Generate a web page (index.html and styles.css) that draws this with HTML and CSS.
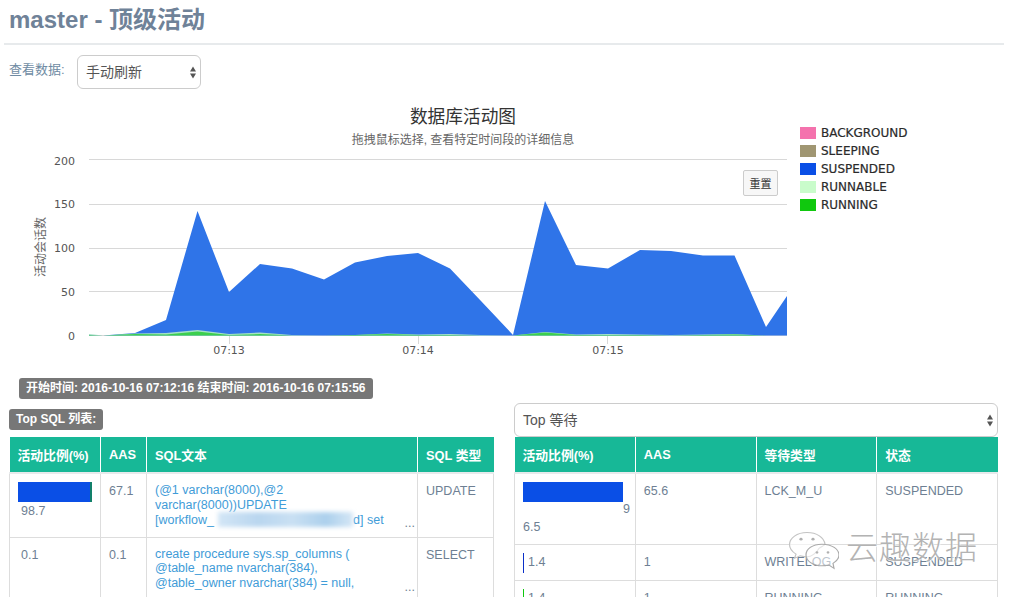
FILE: index.html
```html
<!DOCTYPE html>
<html lang="zh">
<head>
<meta charset="utf-8">
<title>master - 顶级活动</title>
<link rel="stylesheet" href="styles.css">
</head>
<body>
<header class="page-head"><h1 class="page-title">master - 顶级活动</h1></header>
<div class="filter-row">
  <label class="filter-label">查看数据:</label>
  <div class="select select-small"><span>手动刷新</span>
    <svg class="updown" width="6" height="13" viewBox="0 0 6 13"><path d="M3 0.500 6 5.500H0zM3 12.500 0 7.500H6z"/></svg>
  </div>
</div>
<section class="chart">
  <svg class="chart-svg" width="1010" height="265" viewBox="0 100 1010 265">
    <text class="chart-title" x="463" y="123" text-anchor="middle">数据库活动图</text>
    <text class="chart-sub" x="463" y="144" text-anchor="middle">拖拽鼠标选择, 查看特定时间段的详细信息</text>
    <g class="grid">
      <line x1="89" x2="787" y1="159.5" y2="159.5"/>
      <line x1="89" x2="787" y1="204.5" y2="204.5"/>
      <line x1="89" x2="787" y1="248.5" y2="248.5"/>
      <line x1="89" x2="787" y1="291.5" y2="291.5"/>
      <line x1="89" x2="787" y1="335.5" y2="335.5"/>
      <line x1="229.5" x2="229.5" y1="335" y2="344"/>
      <line x1="418.5" x2="418.5" y1="335" y2="344"/>
      <line x1="607.5" x2="607.5" y1="335" y2="344"/>
    </g>
    <path class="area-blue" d="M89 335 103 335.5 135 333 166 320 197.5 211 229 292 260 264 292 268.5 324 279.5 355 262.5 387 256 418 253 450 268.5 481 301 513 335 545 201 576 265 608 268.5 640 250 671 251 703 255.5 734.5 255.5 766 327 787 296V335.5H89z"/>
    <path class="area-pale" d="M89 334 103 335.5 135 333.5 166 333 197.5 330 229 334 260 332.5 292 335 324 335.5 355 335 387 333.5 418 334.5 450 334 481 335 513 335.5 545 332 576 334.5 608 334 640 334.5 671 335 703 334.5 734.5 334 766 335.5 787 335.5V335.5H89z"/>
    <path class="area-green" d="M89 335 103 335.5 135 334 166 334.5 197.5 331.5 229 335 260 334 292 335.5 324 335.5 355 335 387 334 418 335 450 335 481 335.5 513 335.5 545 332.5 576 335 608 335 640 335 671 335.5 703 335 734.5 334.5 766 335.5 787 335.5V335.5H89z"/>
    <g class="tick-y">
      <text x="75" y="165" text-anchor="end">200</text>
      <text x="75" y="208" text-anchor="end">150</text>
      <text x="75" y="252" text-anchor="end">100</text>
      <text x="75" y="296" text-anchor="end">50</text>
      <text x="75" y="340" text-anchor="end">0</text>
    </g>
    <g class="tick-x">
      <text x="229" y="354" text-anchor="middle">07:13</text>
      <text x="418" y="354" text-anchor="middle">07:14</text>
      <text x="608" y="354" text-anchor="middle">07:15</text>
    </g>
    <text class="axis-title" transform="translate(45 247) rotate(-90)" text-anchor="middle">活动会话数</text>
  </svg>
  <button class="reset">重置</button>
  <ul class="legend">
    <li class="legend-item"><i class="swatch sw-bg"></i>BACKGROUND</li>
    <li class="legend-item"><i class="swatch sw-sleep"></i>SLEEPING</li>
    <li class="legend-item"><i class="swatch sw-susp"></i>SUSPENDED</li>
    <li class="legend-item"><i class="swatch sw-runnable"></i>RUNNABLE</li>
    <li class="legend-item"><i class="swatch sw-run"></i>RUNNING</li>
  </ul>
</section>
<div class="range-row"><span class="tag">开始时间: 2016-10-16 07:12:16 结束时间: 2016-10-16 07:15:56</span></div>
<div class="panels">
  <section class="panel panel-left">
    <div class="panel-head"><span class="tag">Top SQL 列表:</span></div>
    <table class="data">
      <colgroup><col class="c-l1"><col class="c-l2"><col class="c-l3"><col class="c-l4"></colgroup>
      <thead><tr><th>活动比例(%)</th><th>AAS</th><th>SQL文本</th><th>SQL 类型</th></tr></thead>
      <tbody>
        <tr class="row-l1">
          <td class="pct-cell"><div class="bar" style="width:74px"><i class="seg-blue"></i><i class="seg-teal"></i></div><span class="pct">98.7</span></td>
          <td>67.1</td>
          <td class="sql"><a>(@1 varchar(8000),@2<br>varchar(8000))UPDATE<br>[workflow_<span class="blurred"></span>d] set</a><span class="more">...</span></td>
          <td>UPDATE</td>
        </tr>
        <tr class="row-l2">
          <td><span class="pct">0.1</span></td>
          <td>0.1</td>
          <td class="sql"><a>create procedure sys.sp_columns (<br>@table_name nvarchar(384),<br>@table_owner nvarchar(384) = null,</a><span class="more">...</span></td>
          <td>SELECT</td>
        </tr>
      </tbody>
    </table>
  </section>
  <section class="panel panel-right">
    <div class="select select-wide"><span>Top 等待</span>
      <svg class="updown" width="6" height="13" viewBox="0 0 6 13"><path d="M3 0.500 6 5.500H0zM3 12.500 0 7.500H6z"/></svg>
    </div>
    <table class="data data-wait">
      <colgroup><col class="c-r"><col class="c-r"><col class="c-r"><col class="c-r"></colgroup>
      <thead><tr><th>活动比例(%)</th><th>AAS</th><th>等待类型</th><th>状态</th></tr></thead>
      <tbody>
        <tr class="row-r1">
          <td class="wrap-pct pct-cell"><span class="bar-inline bar-tall" style="width:100px"></span>96.5</td>
          <td>65.6</td><td>LCK_M_U</td><td>SUSPENDED</td>
        </tr>
        <tr class="row-r2">
          <td class="thin-cell pct-cell"><span class="thin-bar thin-blue"></span><span class="pct">1.4</span></td>
          <td>1</td><td>WRITELOG</td><td>SUSPENDED</td>
        </tr>
        <tr class="row-r2">
          <td class="thin-cell pct-cell"><span class="thin-bar thin-green"></span><span class="pct">1.4</span></td>
          <td>1</td><td>RUNNING</td><td>RUNNING</td>
        </tr>
      </tbody>
    </table>
  </section>
</div>
<div class="watermark">
  <svg class="wm-icon" width="52" height="40" viewBox="0 0 52 48" preserveAspectRatio="none">
    <path class="wm-big" d="M20 3C10 3 2.500 9.500 2.500 17.500 2.500 22 5 26 9 29L7.500 34 13 31C15 31.800 17 32 19 32 24 33 30 27 32 22 36 19 38 18 38 17 37 9 30 3 20 3Z"/>
    <path class="wm-small" d="M35 17C25 17 19 23 19 30S26 43 35 43C38 43 40 42.500 42 42L47 46 46 40C50 37 52 34 52 30 52 23 45 17 35 17Z"/>
    <circle class="wm-eye" cx="14" cy="11" r="1.600"/><circle class="wm-eye" cx="26" cy="11" r="1.600"/>
    <circle class="wm-eye" cx="30" cy="27" r="1.400"/><circle class="wm-eye" cx="41" cy="27" r="1.400"/>
  </svg>
  <span class="wm-text">云趣数据</span>
</div>
</body>
</html>
```

FILE: styles.css
```css
* { box-sizing: border-box; }
html, body { margin: 0; padding: 0; height: 100%; overflow: hidden; background: #fff; }
body {
  font-family: "Liberation Sans", "Noto Sans CJK SC", sans-serif;
  font-size: 12.5px;
  color: #6e7f93;
  position: relative;
}
.page-head { margin: 0 6px 0 4px; height: 45px; border-bottom: 2px solid #e7eaec; padding: 6px 0 0 5px; }
.page-title { margin: 0; font-size: 24px; line-height: 28px; font-weight: 700; color: #6f8298; }
.filter-row { display: flex; align-items: flex-start; margin: 10px 0 0 9px; height: 45px; gap: 12px; }
.filter-label { font-size: 13px; line-height: 30px; color: #6f8ba3; width: 56px; }
.select {
  display: flex; align-items: center; justify-content: space-between;
  border: 1px solid #ccc; border-radius: 6px; background: #fff;
  color: #555; font-size: 14px; height: 34px; padding: 0 4px 2px 8px;
}
.select-small { width: 124px; }
.select-wide { height: 34px; font-size: 14px; }
.updown { fill: #555; flex: none; margin-top: 2px; }
.chart { position: relative; height: 277px; }
.chart-svg { display: block; }
.chart-title { font-size: 17.700px; fill: #333; }
.chart-sub { font-size: 12px; fill: #666; }
.grid line { stroke: #d8d8d8; stroke-width: 1; }
.area-blue { fill: #2f74e8; }
.area-pale { fill: #a3e0c6; }
.area-green { fill: #3ccf4e; }
.tick-y text, .tick-x text { font-family: "DejaVu Sans", sans-serif; font-size: 11px; fill: #555; }
.axis-title { font-size: 12px; fill: #666; }
.reset {
  position: absolute; left: 743px; top: 70px; width: 35px; height: 26px; padding: 0;
  border: 1px solid #ccc; border-radius: 2px; background: #f7f7f7;
  font-family: "Noto Sans CJK SC", sans-serif; font-size: 11px; color: #333;
}
.legend {
  position: absolute; left: 800px; top: 24px; width: 108px; margin: 0; padding: 0;
  list-style: none; overflow: hidden; display: flex; flex-direction: column;
}
.legend-item {
  display: flex; align-items: center; gap: 5px; height: 18px; white-space: nowrap;
  font-family: "DejaVu Sans", sans-serif; font-size: 12px; color: #2a2a2a;
  -webkit-text-stroke: 0.2px #2a2a2a;
}
.swatch { width: 16px; height: 12px; flex: none; }
.sw-bg { background: #f472ad; }
.sw-sleep { background: #a09672; }
.sw-susp { background: #0a4fe6; }
.sw-runnable { background: #c9fccb; }
.sw-run { background: #10c80e; }
.range-row { margin-left: 19px; height: 25px; margin-top: 1px; }
.tag {
  display: inline-block; background: #777; color: #fff; font-weight: 700; font-size: 12px;
  line-height: 21px; height: 21px; padding: 0 7px; border-radius: 3px; white-space: nowrap;
}
.panels { display: flex; gap: 21px; margin: 0 0 0 9px; }
.panel-left, .panel-right { width: 484px; flex: none; }
.panel-head { height: 34px; padding-top: 6px; }
.data { table-layout: fixed; width: 100%; border-collapse: collapse; color: #6e7f93; }
.c-l1 { width: 91px; } .c-l2 { width: 46px; } .c-l3 { width: 271px; } .c-l4 { width: 76px; }
.c-r { width: 25%; }
.data th {
  background: #17b897; color: #fff; font-weight: 700; font-size: 12.800px; text-align: left;
  height: 36px; padding: 0 8px; border-right: 1px solid #fff; border-bottom: 2px solid #e7eaec; white-space: nowrap;
}
.data th:last-child { border-right: 0; }
.data td {
  border: 1px solid #ddd; padding: 9px 8px 8px; vertical-align: top; line-height: 17px; position: relative;
}
.data .pct-cell { padding-top: 8px; }
.row-l1 { height: 64px; }
.row-l2 { height: 64px; }
.row-r1 { height: 71px; }
.row-r2 { height: 36px; }
.bar { display: flex; height: 20px; margin-bottom: 1px; }
.seg-blue { flex: 1; background: #0a4fe6; }
.seg-teal { width: 2px; background: #12806a; }
.pct { margin-left: 3px; }
.sql { padding-right: 14px !important; }
.sql a { color: #3f9cd8; line-height: 14.700px; display: block; }
.blurred {
  display: inline-block; width: 135px; height: 15px; vertical-align: -3px; margin-left: 4px; filter: blur(2px);
  background: linear-gradient(90deg, #d3e6f6, #b9d6ef 30%, #c9e0f3 55%, #acd0ec 80%, #d5e7f6);
}
.more { position: absolute; right: 2px; bottom: 8px; line-height: 12px; color: #6e7f93; }
.wrap-pct { word-break: break-all; padding-right: 3px !important; line-height: 18px !important; }
.bar-inline { display: inline-block; background: #0a4fe6; }
.bar-tall { height: 20px; margin-bottom: 11px; }
.thin-bar { display: inline-block; width: 1px; height: 20px; margin-bottom: -2px; vertical-align: top; margin-right: 1px; }
.thin-blue { background: #0a2fc8; }
.thin-green { background: #10c80e; }
.thin-cell { line-height: 18px !important; }
.watermark {
  position: absolute; left: 787px; top: 525px; display: flex; align-items: flex-start; gap: 7px; pointer-events: none;
}
.wm-icon { flex: none; margin-top: 5px; }
.wm-big { fill: rgba(255,255,255,.6); stroke: #c4c4c4; stroke-width: 1.200; }
.wm-small { fill: rgba(255,255,255,.55); stroke: #aaa; stroke-width: 1.200; }
.wm-eye { fill: #b0b0b0; }
.wm-text {
  font-family: "Noto Sans CJK SC", sans-serif; font-weight: 300; font-size: 32px; line-height: 40px;
  color: #b3b3b3; letter-spacing: 1px; text-shadow: 1px 1px 1px rgba(255,255,255,.8);
}
```
